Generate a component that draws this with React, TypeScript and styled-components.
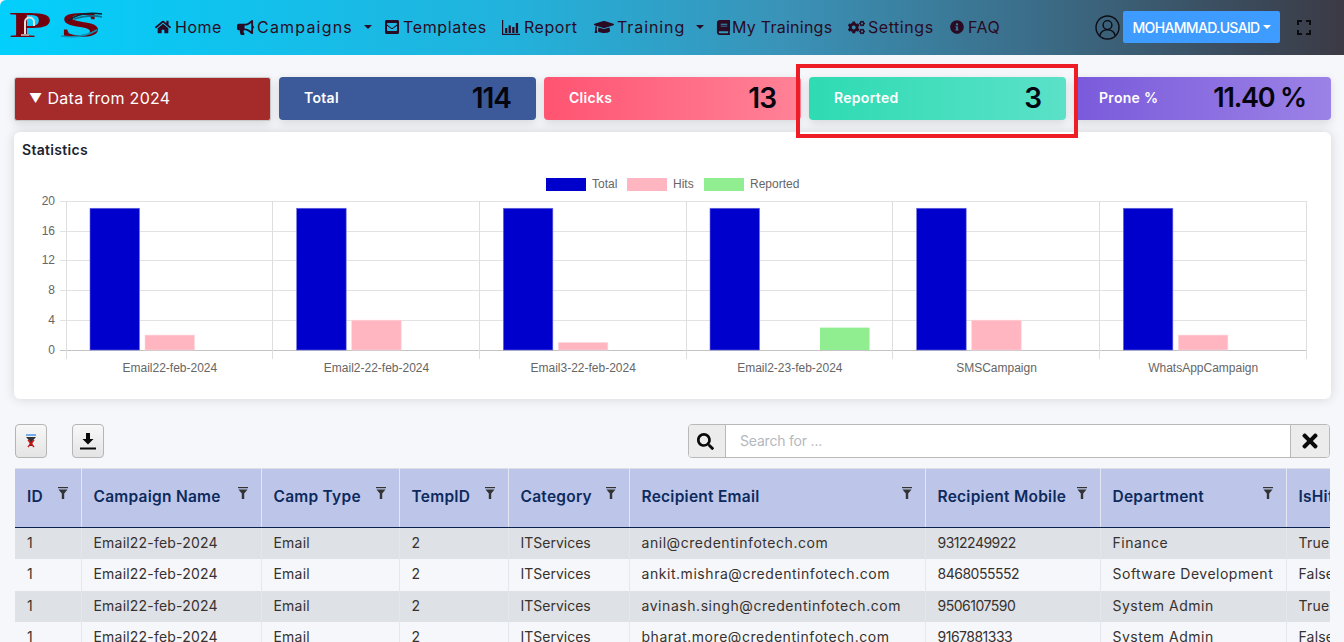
import * as React from 'react';
import styled, { createGlobalStyle } from 'styled-components';
import { FaHome, FaBullhorn, FaEnvelopeSquare, FaGraduationCap, FaBook, FaCogs, FaInfoCircle, FaSearch, FaTimes } from 'react-icons/fa';

const Global = createGlobalStyle`
  * { box-sizing: border-box; }
  html, body { margin: 0; height: 100%; overflow: hidden; background: #f5f7fb; }
  body { font-family: Inter, "Open Sans", sans-serif; color: #212529; }
`

const Page = styled.div`
  height: 642px;
  overflow: hidden;
`

// Top navigation
const Navbar = styled.nav`
  height: 55px;
  display: flex;
  align-items: center;
  padding: 0 0 1px 8px;
  border-top-left-radius: 6px;
  background: linear-gradient(90deg, #03cffc 0%, #22b2dc 38%, #3a93b8 58%, #3b6f8b 76%, #3b3a45 100%);
`

const Menu = styled.div`
  display: flex;
  align-items: center;
  margin-left: 47px;
  flex: 1;
`

const MenuItem = styled.a<{ $w: number; $gap: number; $ls: number }>`
  width: ${p => p.$w}px;
  flex: none;
  display: flex;
  align-items: center;
  gap: ${p => p.$gap}px;
  font-size: 16px;
  letter-spacing: ${p => p.$ls}px;
  color: #2a0b24;
  white-space: nowrap;
  svg { font-size: 16px; flex: none; }
`

const Caret = styled.span<{ $color?: string }>`
  display: inline-block;
  margin-left: 8px;
  border-top: 4.5px solid ${p => p.$color || '#2a0b24'};
  border-left: 4.5px solid transparent;
  border-right: 4.5px solid transparent;
`

const UserIcon = styled.span`
  display: flex;
  margin-right: 3px;
`

const UserButton = styled.button`
  width: 157px;
  height: 32px;
  border: 0;
  border-radius: 2px;
  background: #3e9bff;
  color: #fff;
  font: 500 14px Inter, sans-serif;
  letter-spacing: -.65px;
  display: flex;
  align-items: center;
  justify-content: center;
  white-space: nowrap;
  padding: 0;
  ${Caret} { margin-left: 3px; }
`

const FullScreen = styled.span`
  display: flex;
  margin: 0 33px 0 17px;
`

// Stat cards
const StatRow = styled.div`
  display: grid;
  grid-template-columns: repeat(5, 257px);
  gap: 8px;
  margin: 22px 0 0 14px;
  position: relative;
`

const StatCard = styled.div<{ $bg: string }>`
  height: 43px;
  display: flex;
  align-items: center;
  justify-content: space-between;
  padding: 0 25px 2px;
  border-radius: 4px;
  background: ${p => p.$bg};
  box-shadow: 0 3px 10px rgba(0, 0, 0, .13);
`

const StatLabel = styled.span`
  font-size: 14px;
  font-weight: 600;
  letter-spacing: .3px;
  color: #fff;
`

const StatValue = styled.span<{ $tight?: boolean }>`
  font-size: ${p => (p.$tight ? 27 : 28)}px;
  font-weight: 600;
  letter-spacing: ${p => (p.$tight ? '-1.2px' : '-1px')};
  color: #05050f;
`

const YearToggle = styled.div`
  height: 44px;
  display: flex;
  align-items: center;
  gap: 5px;
  padding: 0 0 2px 14px;
  border: 1px solid #c9c9c9;
  border-radius: 3px;
  background: #a52a2a;
  color: #fff;
  font-size: 16px;
  letter-spacing: .3px;
  box-shadow: 0 3px 10px rgba(0, 0, 0, .13);
`

const YearArrow = styled.span`
  font-size: 13px;
`

const Highlight = styled.div`
  position: absolute;
  left: 782px;
  top: -13px;
  width: 282px;
  height: 74px;
  border: 4px solid #ee1c25;
  pointer-events: none;
`

// Chart card
const ChartCard = styled.section`
  width: 1317px;
  height: 267px;
  margin: 11px 0 0 14px;
  border-radius: 6px;
  background: #fff;
  box-shadow: 0 0 12px rgba(0, 0, 0, .14);
`

const ChartTitle = styled.h5`
  margin: 0;
  height: 36px;
  padding: 9px 0 0 8px;
  font-size: 14px;
  line-height: 17px;
  font-weight: 600;
  letter-spacing: .3px;
  color: #1c2430;
`

// Table toolbar
const Toolbar = styled.div`
  display: flex;
  align-items: stretch;
  height: 34px;
  margin: 25px 14px 0 15px;
`

const ToolButton = styled.button`
  width: 32px;
  padding: 0;
  margin-right: 25px;
  display: flex;
  align-items: center;
  justify-content: center;
  border: 1px solid #b5b5b5;
  border-radius: 4px;
  background: linear-gradient(#f8f8f8, #e4e4e4);
`

const SearchGroup = styled.div`
  width: 642px;
  margin-left: auto;
  display: flex;
  border: 1px solid #b9b9b9;
  border-radius: 4px;
  overflow: hidden;
  background: #fff;
`

const SearchAddon = styled.span<{ $w: number }>`
  flex: none;
  width: ${p => p.$w}px;
  display: flex;
  align-items: center;
  justify-content: center;
  background: #ececec;
  color: #0a0a0a;
`

const SearchIcon = styled(FaSearch)`
  margin-right: 4px;
`

const SearchInput = styled.input`
  flex: 1;
  min-width: 0;
  border: 0;
  border-left: 1px solid #b9b9b9;
  border-right: 1px solid #b9b9b9;
  outline: 0;
  padding: 0 0 2px 14px;
  font: 14px Inter, sans-serif;
  letter-spacing: -.2px;
  &::placeholder { color: #b4b8c0; }
`

// Data table
const TableWrap = styled.div`
  margin: 10px 14px 0 15px;
  overflow: hidden;
`

const Table = styled.table`
  width: 1371px;
  table-layout: fixed;
  border-collapse: collapse;
  border-top: 1px solid #dcdfe6;
`

const Th = styled.th`
  position: relative;
  height: 59px;
  padding: 0 0 3px 12px;
  background: #bdc6e8;
  border-left: 1px solid #e4e7f2;
  border-bottom: 1px solid #0c2350;
  text-align: left;
  font-size: 15.5px;
  font-weight: 600;
  letter-spacing: .25px;
  color: #0d2a5e;
  white-space: nowrap;
  overflow: hidden;
  &:first-child { border-left: 0; }
`

const FilterMark = styled.svg`
  position: absolute;
  top: 18px;
  right: 13px;
`

const Tr = styled.tr`
  height: 31.5px;
  background: #f5f7fb;
  &:nth-child(odd) { background: #dee1e5; }
`

const Td = styled.td<{ $spacing?: number }>`
  padding: 0 0 2px 12px;
  border-left: 1px solid #e4e7ee;
  font-size: 14px;
  letter-spacing: ${p => p.$spacing ?? 0.2}px;
  color: #37312f;
  white-space: nowrap;
  overflow: hidden;
  &:first-child { border-left: 0; }
`

const ReportIcon = () => (
  <svg width="18" height="15" viewBox="0 0 18 15">
    <path d="M.6 0V14.400H18" fill="none" stroke="#2a0b24" strokeWidth="1.200" />
    <path d="M3 8h2.300v5H3zM6.600 5.500h2.300V13H6.600zM10.200 7h2.300v6h-2.300zM13.800 3h2.300v10h-2.300z" fill="#2a0b24" />
  </svg>
)

const menu = [
  { icon: <FaHome />, label: 'Home', w: 82, gap: 4, ls: .5 },
  { icon: <FaBullhorn style={{ fontSize: 17 }} />, label: 'Campaigns', drop: true, w: 147, gap: 3, ls: 1.2 },
  { icon: <FaEnvelopeSquare />, label: 'Templates', w: 118, gap: 3, ls: .65 },
  { icon: <ReportIcon />, label: 'Report', w: 92, gap: 4, ls: .55 },
  { icon: <FaGraduationCap style={{ fontSize: 20 }} />, label: 'Training', drop: true, w: 122, gap: 3, ls: .9 },
  { icon: <FaBook style={{ fontSize: 15 }} />, label: 'My Trainings', w: 132, gap: 1, ls: .25 },
  { icon: <FaCogs style={{ fontSize: 17 }} />, label: 'Settings', w: 102, gap: 3, ls: .55 },
  { icon: <FaInfoCircle style={{ fontSize: 14 }} />, label: 'FAQ', w: 60, gap: 4, ls: .45 },
]

const columns = [
  ['ID', 66], ['Campaign Name', 180], ['Camp Type', 138], ['TempID', 109], ['Category', 121],
  ['Recipient Email', 296], ['Recipient Mobile', 175], ['Department', 186], ['IsHit', 100],
] as const

const rows = [
  ['anil@credentinfotech.com', '9312249922', 'Finance', 'True'],
  ['ankit.mishra@credentinfotech.com', '8468055552', 'Software Development', 'False'],
  ['avinash.singh@credentinfotech.com', '9506107590', 'System Admin', 'True'],
  ['bharat.more@credentinfotech.com', '9167881333', 'System Admin', 'False'],
]

const campaigns = [
  { name: 'Email22-feb-2024', hits: 2, reported: 0 },
  { name: 'Email2-22-feb-2024', hits: 4, reported: 0 },
  { name: 'Email3-22-feb-2024', hits: 1, reported: 0 },
  { name: 'Email2-23-feb-2024', hits: 0, reported: 3 },
  { name: 'SMSCampaign', hits: 4, reported: 0 },
  { name: 'WhatsAppCampaign', hits: 2, reported: 0 },
]

const Logo = () => (
  <svg width="100" height="34" viewBox="8 12 100 34" fontFamily="Liberation Serif, serif" fontWeight="700" fontSize="36" fill="#74000e">
    <text transform="translate(9 39) scale(1.95 1)">P</text>
    <text transform="translate(60 39) scale(2.05 1)">S</text>
    <path d="M25 36V24c0-6 9-6 9 0v4" fill="none" stroke="#e4dede" strokeWidth="2" />
    <path d="M21 37h8" stroke="#a89a9a" strokeWidth="2" />
    <path d="M61 38c14 2 26 0 36-6" fill="none" stroke="#0d8fb0" strokeWidth="1.500" />
    <path d="M68 23c8-7 20-9 34-7" fill="none" stroke="#10202c" strokeWidth="1.600" />
    <path d="M74 21c10-3 20-4 28-2" fill="none" stroke="#0c6f8c" strokeWidth="1.600" />
  </svg>
)

const UserGlyph = () => (
  <svg width="25" height="25" viewBox="0 0 25 25" fill="none" stroke="#0c0c14" strokeWidth="1.400">
    <circle cx="12.500" cy="12.500" r="11.500" />
    <circle cx="12.500" cy="10" r="4.400" />
    <path d="M4.800 20.800c1-4 4-6 7.700-6s6.700 2 7.700 6" />
  </svg>
)

const FullScreenIcon = () => (
  <svg width="14" height="15" viewBox="0 0 14 15" fill="none" stroke="#0b0b10" strokeWidth="2">
    <path d="M1 5V1h4M9 1h4v4M13 10v4H9M5 14H1v-4" />
  </svg>
)

const FilterClearIcon = () => (
  <svg width="10" height="14" viewBox="0 0 10 14">
    <path d="M0 1h10" stroke="#3e8ef0" strokeWidth="1.400" />
    <path d="M0 3h10L6.400 7v5H3.600V7z" fill="#333" />
    <path d="M2 6l6 7M8 6l-6 7" stroke="#d01414" strokeWidth="1.400" />
  </svg>
)

const DownloadIcon = () => (
  <svg width="16" height="17" viewBox="0 0 16 17">
    <path d="M6 0h4v6h3.500L8 11.500 2.500 6H6z" fill="#0a0a0a" />
    <path d="M0 15.500h16" stroke="#0a0a0a" strokeWidth="2" />
  </svg>
)

const HeaderFilter = () => (
  <FilterMark width="10" height="12" viewBox="0 0 10 12">
    <path d="M0 .6h10" stroke="#333" strokeWidth="1.200" />
    <path d="M.5 2.500h9L6.200 6.500V12H3.800V6.500z" fill="#333" />
  </FilterMark>
)

const X0 = 66
const STEP = 206.67
const Y0 = 350
const UNIT = 7.46

const Chart = () => (
  <svg width="1317" height="231" viewBox="14 168 1317 231" style={{ display: 'block' }} fontFamily="Liberation Sans, Arial, sans-serif" fontSize="12" fill="#666">
    <rect x="546" y="178" width="40" height="13" fill="#0000cc" />
    <text x="592" y="188">Total</text>
    <rect x="627" y="178" width="40" height="13" fill="#ffb6c1" />
    <text x="673" y="188">Hits</text>
    <rect x="704" y="178" width="40" height="13" fill="#90ee90" />
    <text x="750" y="188">Reported</text>

    {[20, 16, 12, 8, 4, 0].map(v => {
      const y = Math.round(Y0 - v * UNIT)
      return (
        <g key={v}>
          <path d={`M60 ${y + .5}H1306`} stroke={v === 0 ? '#c4c4c4' : '#e2e2e2'} />
          <text x="55" y={y + 4} textAnchor="end">{v}</text>
        </g>
      )
    })}
    {campaigns.map((_, i) => (
      <path key={i} d={`M${Math.floor(X0 + i * STEP) + .5} 201V359`} stroke="#dedede" />
    ))}
    <path d="M1306.500 201V359" stroke="#dedede" />

    {campaigns.map((c, i) => {
      const x = X0 + i * STEP
      return (
        <g key={c.name}>
          <rect x={x + 24} y={Y0 - 19 * UNIT} width="49.500" height={19 * UNIT} fill="#0000cc" stroke="#6a6ae0" strokeWidth=".6" />
          {c.hits > 0 && <rect x={x + 79} y={Y0 - c.hits * UNIT} width="49.500" height={c.hits * UNIT} fill="#ffb6c1" stroke="#ffd6dc" strokeWidth=".6" />}
          {c.reported > 0 && <rect x={x + 134} y={Y0 - c.reported * UNIT} width="49.500" height={c.reported * UNIT} fill="#90ee90" />}
          <text x={x + STEP / 2 + .5} y="372" textAnchor="middle">{c.name}</text>
        </g>
      )
    })}
  </svg>
)

export default function App() {
  return (
    <Page>
      <Global />
      <Navbar>
        <Logo />
        <Menu>
          {menu.map(m => (
            <MenuItem key={m.label} $w={m.w} $gap={m.gap} $ls={m.ls}>
              {m.icon}
              {m.label}
              {m.drop && <Caret />}
            </MenuItem>
          ))}
        </Menu>
        <UserIcon><UserGlyph /></UserIcon>
        <UserButton>MOHAMMAD.USAID<Caret $color="#fff" /></UserButton>
        <FullScreen><FullScreenIcon /></FullScreen>
      </Navbar>

      <StatRow>
        <YearToggle><YearArrow>▼</YearArrow>Data from 2024</YearToggle>
        <StatCard $bg="#3c5a9a"><StatLabel>Total</StatLabel><StatValue>114</StatValue></StatCard>
        <StatCard $bg="linear-gradient(90deg, #ff5472, #ff8297)"><StatLabel>Clicks</StatLabel><StatValue>13</StatValue></StatCard>
        <StatCard $bg="linear-gradient(90deg, #2edbb3, #5be1c8)"><StatLabel>Reported</StatLabel><StatValue>3</StatValue></StatCard>
        <StatCard $bg="linear-gradient(90deg, #7a5adb, #9b82e6)"><StatLabel>Prone %</StatLabel><StatValue $tight>11.40 %</StatValue></StatCard>
        <Highlight />
      </StatRow>

      <ChartCard>
        <ChartTitle>Statistics</ChartTitle>
        <Chart />
      </ChartCard>

      <Toolbar>
        <ToolButton><FilterClearIcon /></ToolButton>
        <ToolButton><DownloadIcon /></ToolButton>
        <SearchGroup>
          <SearchAddon $w={36}><SearchIcon size={17} /></SearchAddon>
          <SearchInput placeholder="Search for ..." />
          <SearchAddon $w={38}><FaTimes size={22} /></SearchAddon>
        </SearchGroup>
      </Toolbar>

      <TableWrap>
        <Table>
          <colgroup>
            {columns.map(([name, w]) => <col key={name} width={w} />)}
          </colgroup>
          <thead>
            <tr>
              {columns.map(([name]) => (
                <Th key={name}>{name}{name !== 'IsHit' && <HeaderFilter />}</Th>
              ))}
            </tr>
          </thead>
          <tbody>
            {rows.map(r => (
              <Tr key={r[0]}>
                <Td>1</Td>
                <Td>Email22-feb-2024</Td>
                <Td>Email</Td>
                <Td>2</Td>
                <Td $spacing={0}>ITServices</Td>
                <Td $spacing={.55}>{r[0]}</Td>
                <Td $spacing={-.5}>{r[1]}</Td>
                <Td $spacing={.5}>{r[2]}</Td>
                <Td>{r[3]}</Td>
              </Tr>
            ))}
          </tbody>
        </Table>
      </TableWrap>
    </Page>
  )
}
